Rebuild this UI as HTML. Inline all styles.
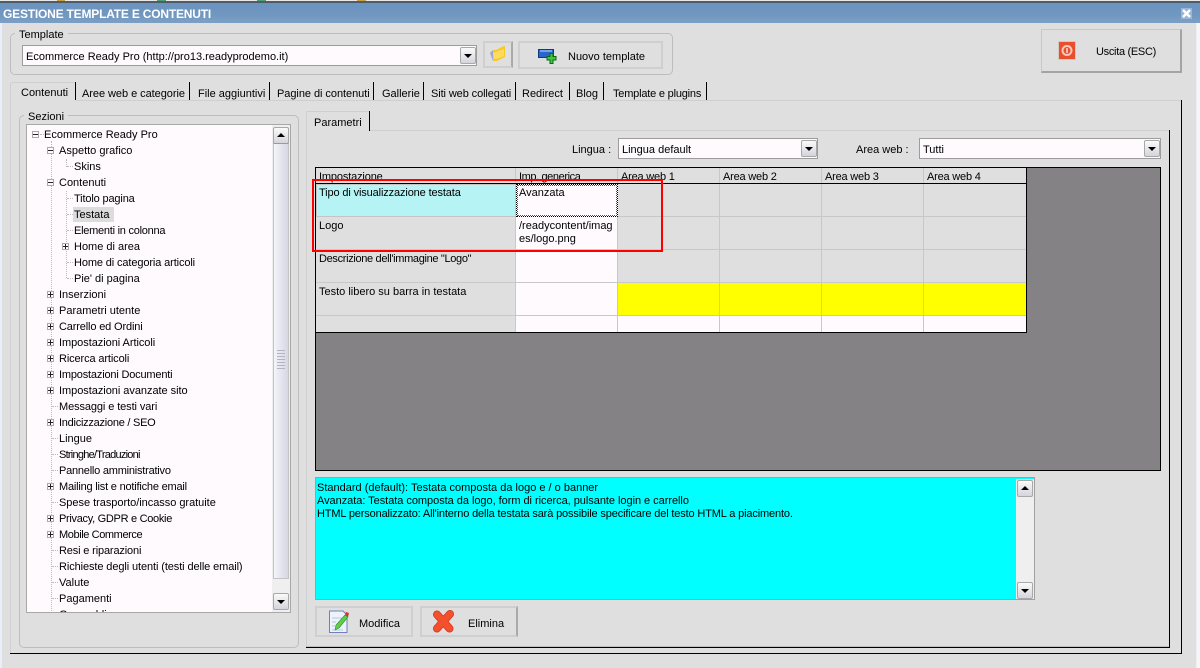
<!DOCTYPE html>
<html><head><meta charset="utf-8"><style>
html,body{margin:0;padding:0;width:1200px;height:668px;overflow:hidden;background:#dfdfdf}
body{position:relative;font:11px/13px "Liberation Sans",Arial,sans-serif;color:#000}
div,span,svg{position:absolute;box-sizing:border-box}
b{font-weight:normal}
.t{white-space:nowrap}
.g{border:1px solid #bdbdbd;border-radius:5px}
.leg{background:#dfdfdf;padding:0 4px;white-space:nowrap}
.combo{background:#fefafe;border:1px solid #9c9c9c;height:21px;padding:5px 0 0 3px;white-space:nowrap}
.sb{width:16px;height:17px;border:1px solid #a8a8a8;border-radius:2px;background:linear-gradient(#fafafa,#d4d4dc)}
.sb:after{content:"";position:absolute;left:3px;border-left:4px solid transparent;border-right:4px solid transparent}
.dn:after{top:6px;border-top:4px solid #000}
.up:after{top:5px;border-bottom:4px solid #000}
.btn{background:#dfdfdf;border:2px solid #cfcfcf}
.sep{width:1px;height:18px;top:82px;background:#000}
.tab{top:88px;white-space:nowrap}
.c{border-right:1px solid #c8c8c8;border-bottom:1px solid #c8c8c8;overflow:hidden}
.r{padding:3px 0 0 3px;line-height:13px}
.w{background:#fefafe}.y{background:#ff0}.d{background:#dfdfdf}
.i{white-space:nowrap;margin-top:2px}
.bx{width:7px;height:7px;margin-top:1px;border:1px solid #aaa;background:#fefafe}
.bx:before{content:"";position:absolute;left:0;top:2px;width:5px;height:1px;background:#222}
.bx.p:after{content:"";position:absolute;left:2px;top:0;width:1px;height:5px;background:#222}
.dh{height:1px;border-top:1px dotted #bbb}
.dv{width:1px;border-left:1px dotted #bbb}
</style></head><body>
<div style="left:0;top:0;width:1200px;height:1px;background:#e8e8e8"></div>
<div style="left:57px;top:0;width:8px;height:1px;background:#c8a040"></div>
<div style="left:157px;top:0;width:9px;height:1px;background:#4aa070"></div>
<div style="left:257px;top:0;width:9px;height:1px;background:#4aa070"></div>
<div style="left:357px;top:0;width:9px;height:1px;background:#c8a040"></div>
<div style="left:0;top:1px;width:1200px;height:2px;background:#4f5b69"></div>
<div style="left:0;top:3px;width:1200px;height:20px;background:linear-gradient(#6a93c0,#6f96bf 50%,#7c9fc4)"></div>
<div class="t" style="left:3px;top:7px;font-size:12px;line-height:14px;color:#fff;font-weight:bold;letter-spacing:-.2px">GESTIONE TEMPLATE E CONTENUTI</div>
<svg style="left:1181px;top:8px" width="11" height="11"><rect width="11" height="11" fill="#9ab6d6"/><path d="M2 2L9 9M9 2L2 9" stroke="#fff" stroke-width="2.4"/></svg>
<div style="left:0;top:23px;width:2px;height:645px;background:#e9eefa"></div>
<div style="left:1196px;top:23px;width:1px;height:645px;background:#eef0f6"></div>
<div style="left:1197px;top:23px;width:3px;height:645px;background:#f6f6f6"></div>

<div class="g" style="left:10px;top:33px;width:663px;height:42px"></div>
<div class="leg" style="left:15px;top:29px">Template</div>
<div class="combo" style="left:22px;top:45px;width:455px">Ecommerce Ready Pro (http://pro13.readyprodemo.it)</div>
<div class="sb dn" style="left:460px;top:47px"></div>
<div class="btn" style="left:483px;top:41px;width:30px;height:27px;border-right-color:#aaa"></div>
<svg style="left:490px;top:46px" width="16" height="16" viewBox="0 0 16 16"><path d="M0 7L3 4H6L14 0H15V11L7 15H3Z" fill="#f8c828"/><path d="M3 7L14 3V10L7 13H4Z" fill="#ffdc5c"/><path d="M0 7L3 4V15Z" fill="#9aa6e8"/></svg>
<div class="btn" style="left:518px;top:41px;width:145px;height:28px"></div>
<svg style="left:537px;top:48px" width="20" height="17" viewBox="0 0 20 17"><path d="M1.500 1.500H16.500V9.500H1.500Z" fill="#2a66c8" stroke="#113a86"/><path d="M3 2H15V4H3Z" fill="#6fa4ea"/><path d="M13 5.500H16V8.500H19V12H16V15.500H13V12H10V8.500H13Z" fill="#3ec63e" stroke="#0a6a1c"/></svg>
<div class="t" style="left:568px;top:51px">Nuovo template</div>

<div style="left:1041px;top:29px;width:141px;height:44px;background:#dfdfdf;border:1px solid #c8c8c8;border-right:2px solid #a4a4a4;border-bottom:2px solid #a4a4a4"></div>
<svg style="left:1058px;top:41px" width="18" height="19" viewBox="0 0 18 19"><rect x=".5" y=".5" width="17" height="18" fill="#e84f2c" stroke="#d8c8c0"/><circle cx="9" cy="9.500" r="4.500" fill="none" stroke="#ffc8b8" stroke-width="2"/><path d="M9 7V12" stroke="#ffd8d0" stroke-width="1.500"/></svg>
<div class="t" style="left:1096px;top:46px;letter-spacing:-.3px">Uscita (ESC)</div>

<div class="tab" style="left:21px;top:87px">Contenuti</div>
<div class="tab" style="left:82px;letter-spacing:-.05px">Aree web e categorie</div>
<div class="tab" style="left:198px">File aggiuntivi</div>
<div class="tab" style="left:277px;letter-spacing:-.05px">Pagine di contenuti</div>
<div class="tab" style="left:382px">Gallerie</div>
<div class="tab" style="left:431px;letter-spacing:-.1px">Siti web collegati</div>
<div class="tab" style="left:522px">Redirect</div>
<div class="tab" style="left:576px">Blog</div>
<div class="tab" style="left:613px;letter-spacing:-.2px">Template e plugins</div>
<div class="sep" style="left:75px"></div><div class="sep" style="left:189px"></div><div class="sep" style="left:269px"></div><div class="sep" style="left:373px"></div><div class="sep" style="left:423px"></div><div class="sep" style="left:515px"></div><div class="sep" style="left:569px"></div><div class="sep" style="left:603px"></div><div class="sep" style="left:706px"></div>
<div style="left:11px;top:82px;width:64px;height:1px;background:#cfcfcf"></div>
<div style="left:76px;top:100px;width:1105px;height:1px;background:#cfcfcf"></div>
<div style="left:10px;top:83px;width:1px;height:570px;background:#cfcfcf"></div>
<div style="left:1181px;top:100px;width:1px;height:554px;background:#000"></div>
<div style="left:10px;top:653px;width:1172px;height:1px;background:#000"></div>

<div class="g" style="left:19px;top:115px;width:280px;height:533px"></div>
<div class="leg" style="left:24px;top:111px">Sezioni</div>
<div style="left:26px;top:124px;width:265px;height:489px;background:#fefafe;border:1px solid #a8a8a8;overflow:hidden">
<div class="dv" style="left:24px;top:16px;height:480px"></div>
<div class="dv" style="left:39px;top:34px;height:8px"></div>
<div class="dv" style="left:39px;top:66px;height:87px"></div>
<div style="left:46px;top:82px;width:41px;height:15px;background:#dcdcdc"></div>
<div class="bx" style="left:5px;top:5px"></div><div class="dh" style="left:13px;top:9px;width:4px"></div><div class="i" style="left:17px;top:2px">Ecommerce Ready Pro</div>
<div class="bx" style="left:20px;top:21px"></div><div class="i" style="left:32px;top:18px">Aspetto grafico</div>
<div class="dh" style="left:40px;top:41px;width:6px"></div><div class="i" style="left:47px;top:34px">Skins</div>
<div class="bx" style="left:20px;top:53px"></div><div class="i" style="left:32px;top:50px">Contenuti</div>
<div class="dh" style="left:40px;top:73px;width:6px"></div><div class="i" style="left:47px;top:66px;letter-spacing:-.15px">Titolo pagina</div>
<div class="dh" style="left:40px;top:89px;width:6px"></div><div class="i" style="left:47px;top:82px">Testata</div>
<div class="dh" style="left:40px;top:105px;width:6px"></div><div class="i" style="left:47px;top:98px;letter-spacing:-.25px">Elementi in colonna</div>
<div class="bx p" style="left:35px;top:117px"></div><div class="i" style="left:47px;top:114px">Home di area</div>
<div class="dh" style="left:40px;top:137px;width:6px"></div><div class="i" style="left:47px;top:130px;letter-spacing:-.12px">Home di categoria articoli</div>
<div class="dh" style="left:40px;top:153px;width:6px"></div><div class="i" style="left:47px;top:146px">Pie' di pagina</div>
<div class="bx p" style="left:20px;top:165px"></div><div class="i" style="left:32px;top:162px">Inserzioni</div>
<div class="bx p" style="left:20px;top:181px"></div><div class="i" style="left:32px;top:178px">Parametri utente</div>
<div class="bx p" style="left:20px;top:197px"></div><div class="i" style="left:32px;top:194px;letter-spacing:-.15px">Carrello ed Ordini</div>
<div class="bx p" style="left:20px;top:213px"></div><div class="i" style="left:32px;top:210px;letter-spacing:-.05px">Impostazioni Articoli</div>
<div class="bx p" style="left:20px;top:229px"></div><div class="i" style="left:32px;top:226px;letter-spacing:-.12px">Ricerca articoli</div>
<div class="bx p" style="left:20px;top:245px"></div><div class="i" style="left:32px;top:242px;letter-spacing:-.18px">Impostazioni Documenti</div>
<div class="bx p" style="left:20px;top:261px"></div><div class="i" style="left:32px;top:258px;letter-spacing:-.04px">Impostazioni avanzate sito</div>
<div class="dh" style="left:25px;top:281px;width:6px"></div><div class="i" style="left:32px;top:274px;letter-spacing:-.1px">Messaggi e testi vari</div>
<div class="bx p" style="left:20px;top:293px"></div><div class="i" style="left:32px;top:290px;letter-spacing:-.25px">Indicizzazione / SEO</div>
<div class="dh" style="left:25px;top:313px;width:6px"></div><div class="i" style="left:32px;top:306px">Lingue</div>
<div class="dh" style="left:25px;top:329px;width:6px"></div><div class="i" style="left:32px;top:322px;letter-spacing:-.75px">Stringhe/Traduzioni</div>
<div class="dh" style="left:25px;top:345px;width:6px"></div><div class="i" style="left:32px;top:338px;letter-spacing:-.22px">Pannello amministrativo</div>
<div class="bx p" style="left:20px;top:357px"></div><div class="i" style="left:32px;top:354px;letter-spacing:-.2px">Mailing list e notifiche email</div>
<div class="dh" style="left:25px;top:377px;width:6px"></div><div class="i" style="left:32px;top:370px;letter-spacing:-.03px">Spese trasporto/incasso gratuite</div>
<div class="bx p" style="left:20px;top:389px"></div><div class="i" style="left:32px;top:386px;letter-spacing:-.3px">Privacy, GDPR e Cookie</div>
<div class="bx p" style="left:20px;top:405px"></div><div class="i" style="left:32px;top:402px;letter-spacing:-.4px">Mobile Commerce</div>
<div class="dh" style="left:25px;top:425px;width:6px"></div><div class="i" style="left:32px;top:418px;letter-spacing:-.15px">Resi e riparazioni</div>
<div class="dh" style="left:25px;top:441px;width:6px"></div><div class="i" style="left:32px;top:434px;letter-spacing:-.1px">Richieste degli utenti (testi delle email)</div>
<div class="dh" style="left:25px;top:457px;width:6px"></div><div class="i" style="left:32px;top:450px">Valute</div>
<div class="dh" style="left:25px;top:473px;width:6px"></div><div class="i" style="left:32px;top:466px">Pagamenti</div>
<div class="i" style="left:32px;top:482px">Guarnaldi e coupon</div>
<div style="left:245px;top:0;width:18px;height:487px;background:#efefef"></div>
<div class="sb up" style="left:246px;top:2px"></div>
<div style="left:246px;top:18px;width:16px;height:436px;border:1px solid #c4c4c4;border-top-color:#9a9a9a;background:linear-gradient(90deg,#f4f4fa,#d6d6e4)"></div>
<div style="left:250px;top:225px;width:8px;height:21px;background:repeating-linear-gradient(#b4b4c0 0 1px,transparent 1px 3px)"></div>
<div class="sb dn" style="left:246px;top:468px"></div>
</div>

<div style="left:306px;top:111px;width:1px;height:20px;background:#cfcfcf"></div>
<div style="left:307px;top:111px;width:62px;height:1px;background:#cfcfcf"></div>
<div class="t" style="left:314px;top:117px">Parametri</div>
<div style="left:369px;top:111px;width:1px;height:20px;background:#000"></div>
<div style="left:370px;top:130px;width:799px;height:1px;background:#cfcfcf"></div>
<div style="left:306px;top:131px;width:1px;height:516px;background:#cfcfcf"></div>
<div style="left:1169px;top:130px;width:1px;height:518px;background:#000"></div>
<div style="left:306px;top:646px;width:863px;height:1px;background:#bdbdbd"></div>
<div style="left:306px;top:647px;width:864px;height:1px;background:#000"></div>

<div class="t" style="left:572px;top:144px">Lingua :</div>
<div class="combo" style="left:618px;top:138px;width:200px">Lingua default</div>
<div class="sb dn" style="left:801px;top:140px"></div>
<div class="t" style="left:856px;top:144px">Area web :</div>
<div class="combo" style="left:919px;top:138px;width:242px">Tutti</div>
<div class="sb dn" style="left:1144px;top:140px"></div>

<div style="left:315px;top:167px;width:846px;height:304px;background:#848284;border:1px solid #000">
<div class="d" style="left:0;top:0;width:710px;height:164px"></div>
<div class="c d r" style="left:0;top:0;width:200px;height:16px;border-bottom:0;letter-spacing:-.15px">Impostazione</div>
<div class="c d r" style="left:200px;top:0;width:102px;height:16px;border-bottom:0;letter-spacing:-.4px">Imp. generica</div>
<div class="c d r" style="left:302px;top:0;width:102px;height:16px;border-bottom:0;letter-spacing:-.2px">Area web 1</div>
<div class="c d r" style="left:404px;top:0;width:102px;height:16px;border-bottom:0;letter-spacing:-.2px">Area web 2</div>
<div class="c d r" style="left:506px;top:0;width:102px;height:16px;border-bottom:0;letter-spacing:-.2px">Area web 3</div>
<div class="c d r" style="left:608px;top:0;width:102px;height:16px;border-right:0;border-bottom:0;letter-spacing:-.2px">Area web 4</div>
<div style="left:0;top:15px;width:710px;height:1px;background:#000"></div>

<div class="c r" style="left:0;top:16px;width:200px;height:33px;background:#b5f3f5;border:1px solid #c4c4c4;padding-top:2px;padding-left:2px;letter-spacing:-.13px">Tipo di visualizzazione testata</div>
<div class="c w r" style="left:200px;top:16px;width:102px;height:33px;border:1px dotted #000;padding-top:2px;padding-left:2px;outline:1px dotted #555;outline-offset:-2px">Avanzata</div>
<div class="c d" style="left:302px;top:16px;width:102px;height:33px"></div><div class="c d" style="left:404px;top:16px;width:102px;height:33px"></div><div class="c d" style="left:506px;top:16px;width:102px;height:33px"></div><div class="c d" style="left:608px;top:16px;width:102px;height:33px;border-right:0"></div>

<div class="c d r" style="left:0;top:49px;width:200px;height:33px">Logo</div>
<div class="c w r" style="left:200px;top:49px;width:102px;height:33px;white-space:normal;word-break:break-all">/readycontent/images/logo.png</div>
<div class="c d" style="left:302px;top:49px;width:102px;height:33px"></div><div class="c d" style="left:404px;top:49px;width:102px;height:33px"></div><div class="c d" style="left:506px;top:49px;width:102px;height:33px"></div><div class="c d" style="left:608px;top:49px;width:102px;height:33px;border-right:0"></div>

<div class="c d r" style="left:0;top:82px;width:200px;height:33px;letter-spacing:-.33px">Descrizione dell'immagine "Logo"</div>
<div class="c w" style="left:200px;top:82px;width:102px;height:33px"></div>
<div class="c d" style="left:302px;top:82px;width:102px;height:33px"></div><div class="c d" style="left:404px;top:82px;width:102px;height:33px"></div><div class="c d" style="left:506px;top:82px;width:102px;height:33px"></div><div class="c d" style="left:608px;top:82px;width:102px;height:33px;border-right:0"></div>

<div class="c d r" style="left:0;top:115px;width:200px;height:33px">Testo libero su barra in testata</div>
<div class="c w" style="left:200px;top:115px;width:102px;height:33px"></div>
<div class="c y" style="left:302px;top:115px;width:102px;height:33px"></div><div class="c y" style="left:404px;top:115px;width:102px;height:33px"></div><div class="c y" style="left:506px;top:115px;width:102px;height:33px"></div><div class="c y" style="left:608px;top:115px;width:102px;height:33px;border-right:0"></div>

<div class="c d" style="left:0;top:148px;width:200px;height:16px;border-bottom:0"></div>
<div class="c w" style="left:200px;top:148px;width:102px;height:16px;border-bottom:0"></div>
<div class="c w" style="left:302px;top:148px;width:102px;height:16px;border-bottom:0"></div><div class="c w" style="left:404px;top:148px;width:102px;height:16px;border-bottom:0"></div><div class="c w" style="left:506px;top:148px;width:102px;height:16px;border-bottom:0"></div><div class="c w" style="left:608px;top:148px;width:102px;height:16px;border:0"></div>
<div style="left:0;top:164px;width:711px;height:1px;background:#000"></div>
<div style="left:710px;top:0;width:1px;height:165px;background:#000"></div>
</div>

<div style="left:312px;top:179px;width:351px;height:73px;border:2px solid #f00"></div>

<div style="left:315px;top:477px;width:720px;height:123px;background:#0ff;border:1px solid #a0a0a0;padding:4px 0 0 1px;line-height:13px;white-space:nowrap">Standard (default): Testata composta da logo e / o banner<br><b style="letter-spacing:-.04px">Avanzata: Testata composta da logo, form di ricerca, pulsante login e carrello</b><br><b style="letter-spacing:-.15px">HTML personalizzato: All'interno della testata sarà possibile specificare del testo HTML a piacimento.</b>
<div style="left:700px;top:1px;width:18px;height:120px;background:#efefef"></div>
<div class="sb up" style="left:701px;top:2px"></div>
<div class="sb dn" style="left:701px;top:104px"></div>
</div>

<div class="btn" style="left:315px;top:606px;width:98px;height:31px"></div>
<svg style="left:328px;top:609px" width="24" height="26" viewBox="0 0 24 26"><path d="M1.500 2H15L19 6V23.500H1.500Z" fill="#eef2fa" stroke="#6f7fc0"/><path d="M4 9H15M4 13H8M4 17H7M4 21H15" stroke="#b8c4de"/><path d="M7 21L8 16L17 6L20 8L11 19Z" fill="#5cd048" stroke="#2c8a30" stroke-width=".6"/><path d="M17 6L18 3L21 4L20 8Z" fill="#d8352a"/></svg>
<div class="t" style="left:359px;top:618px">Modifica</div>
<div class="btn" style="left:420px;top:606px;width:98px;height:31px;border-right-color:#aaa"></div>
<svg style="left:432px;top:609px" width="24" height="25" viewBox="0 0 24 25"><path d="M5 5.500L17.500 19.500M18 5L5 19.500" stroke="#c83a20" stroke-width="8" stroke-linecap="round"/><path d="M5 5.500L17.500 19.500M18 5L5 19.500" stroke="#f4502e" stroke-width="6.500" stroke-linecap="round"/></svg>
<div class="t" style="left:468px;top:618px">Elimina</div>
</body></html>
